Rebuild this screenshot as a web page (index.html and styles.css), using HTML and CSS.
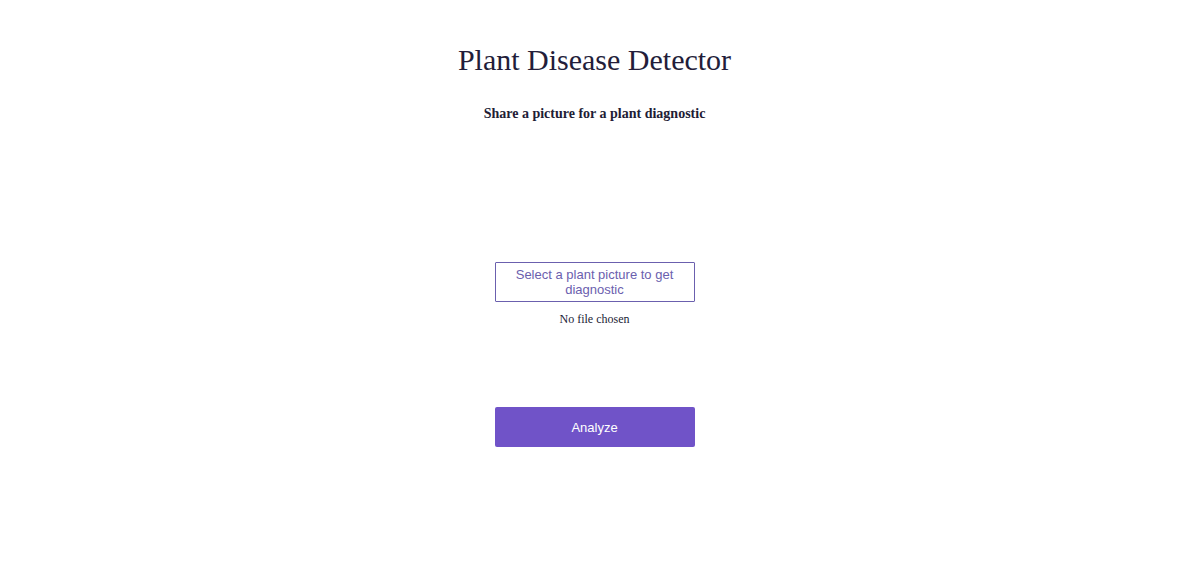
FILE: index.html
```html
<!DOCTYPE html>
<html lang="en">
<head>
<meta charset="utf-8">
<title>Plant Disease Detector</title>
<link rel="stylesheet" href="styles.css">
</head>
<body>
<main class="page">
  <h1 class="title">Plant Disease Detector</h1>
  <p class="subtitle">Share a picture for a plant diagnostic</p>
  <form class="form">
    <label class="file-label" for="file">Select a plant picture to get diagnostic</label>
    <input class="file-input" id="file" type="file">
    <span class="file-name">No file chosen</span>
    <button class="analyze" type="button">Analyze</button>
  </form>
</main>
</body>
</html>
```

FILE: styles.css
```css
html, body {
  margin: 0;
  padding: 0;
  background: #ffffff;
}

.page {
  display: flex;
  flex-direction: column;
  align-items: center;
  padding-top: 42px;
  padding-right: 4px;
  font-family: "Liberation Serif", "Times New Roman", serif;
  color: #221c35;
}

.title {
  margin: 0;
  font-size: 30px;
  font-weight: normal;
  line-height: 35px;
  color: #231d3a;
}

.subtitle {
  margin: 29px 0 0;
  font-size: 14px;
  font-weight: bold;
  line-height: 16px;
}

.form {
  display: flex;
  flex-direction: column;
  align-items: center;
  margin-top: 140px;
}

.file-label {
  box-sizing: border-box;
  width: 200px;
  height: 40px;
  padding: 4px 8px;
  border: 1px solid #6b60ae;
  border-radius: 1px;
  font-family: "Liberation Sans", Arial, sans-serif;
  font-size: 13px;
  line-height: 15px;
  color: #6b60ae;
  text-align: center;
  cursor: pointer;
}

.file-input {
  display: none;
}

.file-name {
  margin-top: 10px;
  font-size: 12px;
  line-height: 14px;
  color: #221c35;
}

.analyze {
  margin-top: 81px;
  width: 200px;
  height: 40px;
  border: none;
  border-radius: 2px;
  background: #7053c8;
  color: #ffffff;
  font-family: "Liberation Sans", Arial, sans-serif;
  font-size: 13px;
  cursor: pointer;
}
```
